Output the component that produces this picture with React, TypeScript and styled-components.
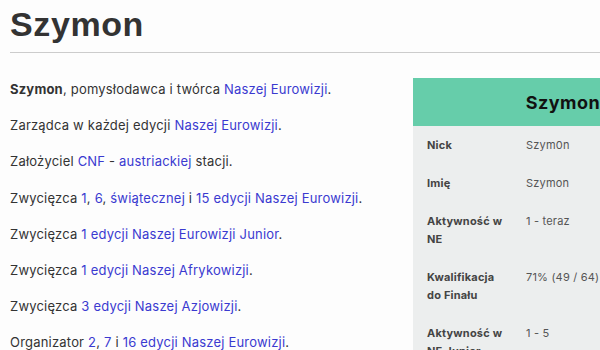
import styled, { createGlobalStyle } from 'styled-components';

const GlobalStyle = createGlobalStyle`
  body {
    margin: 0;
    background: #fdfdfd;
    font-family: "Inter", "Noto Sans", sans-serif;
    color: #333;
    overflow: hidden;
  }
`;

interface Row {
  label: string;
  value: string;
}

const rows: Row[] = [
  { label: 'Nick', value: 'Szym0n' },
  { label: 'Imię', value: 'Szymon' },
  { label: 'Aktywność w NE', value: '1 - teraz' },
  { label: 'Kwalifikacja do Finału', value: '71% (49 / 64)' },
  { label: 'Aktywność w NE Junior', value: '1 - 5' },
];

export default function App() {
  return (
    <>
      <GlobalStyle />
      <Page>
        <Title>Szymon</Title>
        <Body>
          <Text>
            <P>
              <b>Szymon</b>, pomysłodawca i twórca <A>Naszej Eurowizji</A>.
            </P>
            <P>
              Zarządca w każdej edycji <A>Naszej Eurowizji</A>.
            </P>
            <P>
              Założyciel <A>CNF</A> - <A>austriackiej</A> stacji.
            </P>
            <P>
              Zwycięzca <A>1</A>, <A>6</A>, <A>świątecznej</A> i <A>15</A>{' '}
              <A>edycji Naszej Eurowizji</A>.
            </P>
            <P>
              Zwycięzca <A>1 edycji Naszej Eurowizji Junior</A>.
            </P>
            <P>
              Zwycięzca <A>1 edycji Naszej Afrykowizji</A>.
            </P>
            <P>
              Zwycięzca <A>3 edycji Naszej Azjowizji</A>.
            </P>
            <P>
              Organizator <A>2</A>, <A>7</A> i <A>16</A> <A>edycji Naszej Eurowizji</A>.
            </P>
          </Text>
          <Infobox>
            <BoxTitle>Szymon</BoxTitle>
            {rows.map((r) => (
              <BoxRow key={r.label}>
                <Label>{r.label}</Label>
                <Value>{r.value}</Value>
              </BoxRow>
            ))}
          </Infobox>
        </Body>
      </Page>
    </>
  );
}

const Page = styled.div`
  width: 760px;
  padding: 0 10px;
`;

const Title = styled.h1`
  margin: 0;
  padding: 3px 0 6px;
  font-family: "Liberation Sans", Arial, sans-serif;
  font-size: 34px;
  font-weight: bold;
  letter-spacing: 0.6px;
  color: #333;
  line-height: 43px;
  border-bottom: 1px solid #ccc;
`;

const Body = styled.div`
  display: flex;
  justify-content: space-between;
  padding-top: 25px;
`;

const Text = styled.div`
  width: 380px;
`;

const P = styled.p`
  margin: 0 0 14.2px;
  font-size: 13px;
  line-height: 22px;
  letter-spacing: 0.2px;
  color: #333;

  b {
    font-weight: 700;
  }
`;

const A = styled.span`
  color: #3a3ad0;
`;

const Infobox = styled.div`
  width: 300px;
  margin-right: 57px;
  background: #eceeee;
`;

const BoxTitle = styled.div`
  height: 48px;
  background: #66cdaa;
  display: flex;
  align-items: center;
  justify-content: center;
  font-size: 18px;
  font-weight: 700;
  letter-spacing: 0.5px;
  color: #111;
`;

const BoxRow = styled.div`
  display: grid;
  grid-template-columns: 99px 1fr;
  padding: 10px 14px;
  font-size: 11px;
  line-height: 18px;
`;

const Label = styled.div`
  font-weight: 700;
  color: #444;
  padding-right: 18px;
  letter-spacing: 0.2px;
`;

const Value = styled.div`
  color: #555;
  letter-spacing: 0.2px;
`;
